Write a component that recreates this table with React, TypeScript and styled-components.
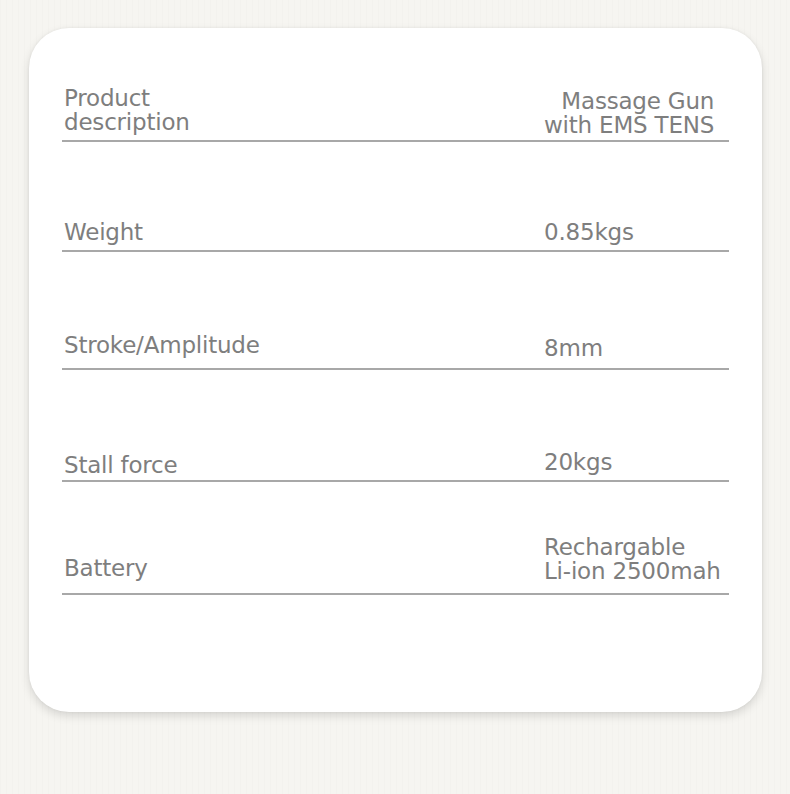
import React from "react";
import styled, { createGlobalStyle } from "styled-components";

const GlobalStyle = createGlobalStyle`
  html, body {
    margin: 0;
    padding: 0;
    background: #f6f5f1;
  }
  * {
    box-sizing: border-box;
  }
`;

const Page = styled.div`
  width: 790px;
  height: 794px;
  padding: 28px 28px 0 29px;
  background: repeating-linear-gradient(
      90deg,
      rgba(0, 0, 0, 0.012) 0px,
      rgba(0, 0, 0, 0.012) 1px,
      transparent 1px,
      transparent 6px
    ),
    #f6f5f1;
`;

const Card = styled.div`
  width: 733px;
  height: 684px;
  background: #ffffff;
  border-radius: 40px;
  box-shadow: 0 4px 10px rgba(0, 0, 0, 0.13), 0 0 3px rgba(0, 0, 0, 0.06);
  padding: 56px 33px 0 33px;
  display: flex;
  flex-direction: column;
`;

const Row = styled.div<{ $h: number }>`
  height: ${(p) => p.$h}px;
  display: grid;
  grid-template-columns: 482px 1fr;
  align-items: end;
  border-bottom: 2px solid #a8a8a8;
`;

const Cell = styled.div<{ $pb: number; $pl?: number }>`
  font-family: "DejaVu Sans", "Liberation Sans", sans-serif;
  font-size: 23px;
  line-height: 24px;
  letter-spacing: -0.2px;
  color: #7e7e7e;
  padding-bottom: ${(p) => p.$pb}px;
  padding-left: ${(p) => p.$pl ?? 0}px;
  white-space: pre;
`;

const Value = styled(Cell)<{ $right?: boolean }>`
  justify-self: start;
  text-align: ${(p) => (p.$right ? "right" : "left")};
`;

const specs = [
  { h: 58, label: "Product\ndescription", lpb: 6, value: "Massage Gun\nwith EMS TENS", vpb: 3, right: true },
  { h: 110, label: "Weight", lpb: 6, value: "0.85kgs", vpb: 6 },
  { h: 118, label: "Stroke/Amplitude", lpb: 11, value: "8mm", vpb: 8 },
  { h: 112, label: "Stall force", lpb: 3, value: "20kgs", vpb: 6 },
  { h: 113, label: "Battery", lpb: 13, value: "Rechargable\nLi-ion 2500mah", vpb: 10 },
];

const App: React.FC = () => {
  return (
    <>
      <GlobalStyle />
      <Page>
        <Card>
          {specs.map((s) => (
            <Row key={s.label} $h={s.h}>
              <Cell $pb={s.lpb} $pl={2}>
                {s.label}
              </Cell>
              <Value $pb={s.vpb} $right={s.right}>
                {s.value}
              </Value>
            </Row>
          ))}
        </Card>
      </Page>
    </>
  );
};

export default App;
